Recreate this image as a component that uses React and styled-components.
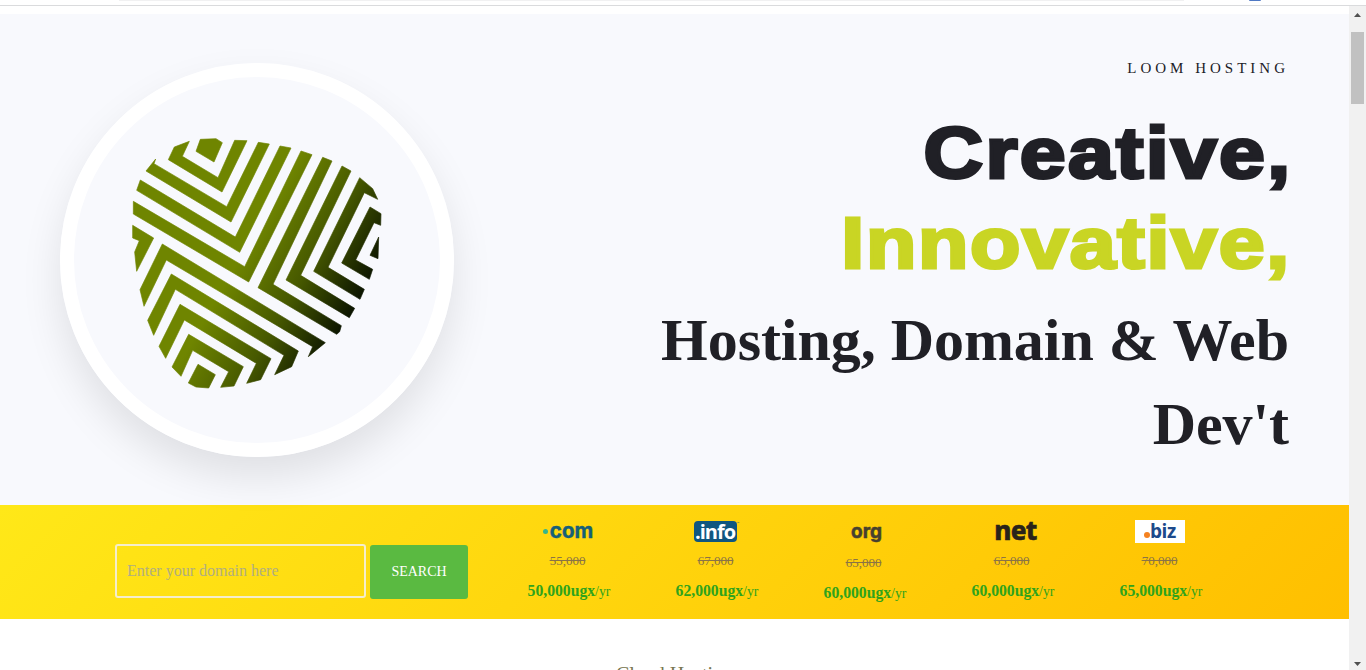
import React from "react";
import styled, { createGlobalStyle, css } from "styled-components";

const GlobalStyle = createGlobalStyle`
  * { box-sizing: border-box; }
  html, body { margin: 0; padding: 0; overflow: hidden; background: #fff; }
  body { font-family: "Liberation Serif", "Times New Roman", serif; }
`;

const Window = styled.div`
  display: flex;
  flex-direction: column;
  width: 1366px;
  height: 670px;
  overflow: hidden;
`;

const BrowserEdge = styled.div`
  display: flex;
  flex: none;
  align-items: flex-start;
  height: 6px;
  padding-left: 119px;
  border-bottom: 1px solid #dadbdd;
  background: #fff;
`;

const AddressEdge = styled.div`
  width: 1065px;
  height: 1px;
  background: #f1f1f2;
`;

const ExtensionEdge = styled.div`
  width: 12px;
  height: 1px;
  margin-left: 65px;
  border-radius: 0 0 2px 2px;
  background: #5079c4;
`;

const Viewport = styled.div`
  display: flex;
  flex: 1;
  min-height: 0;
`;

const Page = styled.main`
  width: 1349px;
  padding-top: 8px;
  overflow: hidden;
`;

const Hero = styled.section`
  display: flex;
  justify-content: space-between;
  height: 491px;
  padding: 49px 61px 0 60px;
  background: #f8f9fd;
`;

const LogoRing = styled.div`
  display: flex;
  flex: none;
  align-items: center;
  justify-content: center;
  width: 394px;
  height: 394px;
  padding: 5px 0 0 0;
  border: 14px solid #fff;
  border-radius: 50%;
  box-shadow: 0 20px 40px rgba(0, 0, 0, 0.1);
`;

const Intro = styled.div`
  display: flex;
  flex-direction: column;
  align-items: flex-end;
  width: 640px;
  text-align: right;
  color: #202026;
`;

const Eyebrow = styled.div`
  height: 48px;
  margin-top: -4px;
  font-size: 15px;
  line-height: 18px;
  letter-spacing: 4px;
  margin-right: -1px;
`;

const Display = styled.div`
  height: 90px;
  margin-right: ${(p) => p.$pull}px;
  color: ${(p) => p.$color};
  font: bold 73px/91px "Liberation Sans", Arial, sans-serif;
  letter-spacing: ${(p) => p.$spacing}px;
  -webkit-text-stroke: 3.2px ${(p) => p.$color};
  transform: scaleX(1.13);
  transform-origin: right center;
  white-space: nowrap;
`;

const Tagline = styled.h1`
  margin: 11px -1px 0 0;
  font-size: 60px;
  line-height: 84px;
  font-weight: bold;
  letter-spacing: -0.05px;
  white-space: nowrap;
`;

const DomainBar = styled.section`
  display: flex;
  height: 114px;
  padding-left: 115px;
  background: linear-gradient(135deg, #ffe818 0%, #ffbf00 100%);
`;

const SearchForm = styled.form`
  display: flex;
  gap: 4px;
  width: 379px;
  padding-top: 39px;
`;

const DomainInput = styled.input`
  width: 251px;
  height: 54px;
  padding: 0 10px;
  border: 2px solid #f5edcb;
  border-radius: 3px;
  outline: none;
  background: transparent;
  font: 16px "Liberation Serif", serif;
  &::placeholder { color: #b1ae80; opacity: 1; }
`;

const SearchButton = styled.button`
  width: 98px;
  height: 54px;
  margin-top: 1px;
  padding: 0;
  border: 0;
  border-radius: 3px;
  background: #5aba41;
  color: #fff;
  font: 14px "Liberation Serif", serif;
`;

const Offers = styled.div`
  display: grid;
  grid-template-columns: repeat(5, 148px);
`;

const Offer = styled.div`
  display: flex;
  flex-direction: column;
  align-items: center;
  padding-top: ${(p) => (p.$low ? 17 : 15)}px;
`;

const LogoSlot = styled.div`
  display: flex;
  align-items: center;
  justify-content: center;
  height: 23px;
`;

const OldPrice = styled.div`
  margin: 9px 1px 0 0;
  color: #8a7346;
  font-size: 13px;
  line-height: 18px;
  text-decoration: line-through;
`;

const Price = styled.div`
  margin: 12px 0 0 2px;
  color: #2fa31c;
  font-size: 13.8px;
  line-height: 18px;
  white-space: nowrap;
  b { font-size: 15.7px; }
`;

const wordmark = css`
  font-family: ${(p) => p.$font};
  font-weight: ${(p) => p.$weight || 700};
  font-size: ${(p) => p.$size}px;
  letter-spacing: ${(p) => p.$spacing || 0}px;
  line-height: 23px;
`;

const Wordmark = styled.span`
  ${wordmark}
  margin-top: ${(p) => p.$top || 0}px;
  margin-left: ${(p) => p.$left || 0}px;
  color: ${(p) => p.$color};
  -webkit-text-stroke: ${(p) => p.$stroke || 0}px ${(p) => p.$color};
`;

const ComDot = styled.i`
  width: 5px;
  height: 5px;
  margin-right: 2px;
  border-radius: 50%;
  background: #35b58c;
`;

const InfoBadge = styled.span`
  ${wordmark}
  width: 43px;
  height: 21px;
  border-radius: 4px;
  background: #10567f;
  color: #fff;
  line-height: 21px;
  text-align: center;
`;

const TradeMark = styled.small`
  align-self: flex-start;
  width: 3px;
  margin-right: -1px;
  color: #10567f;
  font: 3px/6px "Liberation Sans", sans-serif;
`;

const BizBadge = styled.span`
  ${wordmark}
  display: flex;
  align-items: baseline;
  justify-content: center;
  width: 50px;
  height: 23px;
  background: #fff;
  color: #1d4a8b;
`;

const BizDot = styled.i`
  width: 6px;
  height: 6px;
  border-radius: 50%;
  background: #f58220;
`;

const NextSection = styled.section`
  padding-top: 44px;
  color: #77754f;
  font-size: 20px;
  line-height: 22px;
  text-align: center;
`;

const Scrollbar = styled.aside`
  display: flex;
  flex-direction: column;
  align-items: center;
  justify-content: space-between;
  width: 17px;
  padding: 7px 0 4px;
  background: #f1f1f1;
`;

const Thumb = styled.div`
  width: 13px;
  height: 72px;
  margin: 15px 0 auto;
  background: #c1c1c1;
`;

const Arrow = styled.svg`
  display: block;
  width: 7px;
  height: 4px;
  fill: #505050;
`;

const LOGO_SHAPES = [
  "230,78 243,42 290,40 309,52 284,110",
  "210,48 165,65 147,103 308,200 383,46 346,45 296,157 189,93",
  "109,101 80,137 335,290 450,56 417,51 322,244 104,115",
  "63,164 52,195 361,381 515,68 482,62 348,335",
  "42,228 42,266 388,470 578,88 545,77 376,424",
  "610,96 638,107 461,477 666,601 661,619 652,627 416,487",
  "668,122 695,137 544,450 706,549 690,577 500,464",
  "721,157 760,190 775,222 735,202 626,426 735,492 722,522 583,438",
  "752,245 785,265 784,300 764,292 709,404 760,432 750,462 667,413",
  "778,335 776,400 752,390",
  "40,300 103,338 52,438 46,380 60,346 40,338",
  "129,356 618,652 567,694 580,664 141,404 74,543 62,493",
  "156,446 537,677 517,724 466,748 494,690 168,492 103,630 85,585",
  "182,537 455,700 424,763 382,774 411,714 195,584 139,699 119,663",
  "208,627 372,724 344,782 304,786 328,739 220,675 185,753 158,725",
  "236,717 288,748 268,788 230,785 207,773",
];

function LoomLogo() {
  return (
    <svg width="250" height="252" viewBox="38 35 750 756" aria-label="Loom">
      <defs>
        <linearGradient id="weave" gradientUnits="userSpaceOnUse" x1="440" y1="260" x2="775" y2="452">
          <stop offset="0" stopColor="#6f8500" />
          <stop offset="0.5" stopColor="#465800" />
          <stop offset="1" stopColor="#081000" />
        </linearGradient>
      </defs>
      {LOGO_SHAPES.map((points) => (
        <polygon key={points} points={points} fill="url(#weave)" stroke="url(#weave)" strokeWidth="2" />
      ))}
    </svg>
  );
}

const OFFERS = [
  {
    logo: (
      <>
        <ComDot />
        <Wordmark $font="Inter, sans-serif" $weight={700} $size={20.5} $color="#165f78" $top={-3} $stroke={0.4}>com</Wordmark>
      </>
    ),
    old: "55,000",
    price: "50,000ugx",
  },
  {
    logo: (
      <>
        <InfoBadge $font='"Open Sans", sans-serif' $size={20} $spacing={-1}>.info</InfoBadge>
        <TradeMark>™</TradeMark>
      </>
    ),
    old: "67,000",
    price: "62,000ugx",
  },
  {
    logo: <Wordmark $font="Inter, sans-serif" $weight={700} $size={19} $color="#46402f" $top={-4} $left={5} $stroke={0.5}>org</Wordmark>,
    old: "65,000",
    price: "60,000ugx",
    low: true,
  },
  {
    logo: <Wordmark $font='"Noto Sans", sans-serif' $weight={800} $size={26} $spacing={-0.6} $color="#29231a" $top={-2} $left={7} $stroke={0.5}>net</Wordmark>,
    old: "65,000",
    price: "60,000ugx",
  },
  {
    logo: <BizBadge $font='"Open Sans", sans-serif' $size={19} $spacing={-0.3}><BizDot />biz</BizBadge>,
    old: "70,000",
    price: "65,000ugx",
  },
];

export default function App() {
  return (
    <Window>
      <GlobalStyle />
      <BrowserEdge>
        <AddressEdge />
        <ExtensionEdge />
      </BrowserEdge>
      <Viewport>
        <Page>
          <Hero>
            <LogoRing><LoomLogo /></LogoRing>
            <Intro>
              <Eyebrow>LOOM HOSTING</Eyebrow>
              <Display $color="#202026" $spacing={2} $pull={-4}>Creative,</Display>
              <Display $color="#c9d524" $spacing={1.5} $pull={-3}>Innovative,</Display>
              <Tagline>Hosting, Domain &amp; Web<br />Dev't</Tagline>
            </Intro>
          </Hero>
          <DomainBar>
            <SearchForm onSubmit={(e) => e.preventDefault()}>
              <DomainInput placeholder="Enter your domain here" />
              <SearchButton>SEARCH</SearchButton>
            </SearchForm>
            <Offers>
              {OFFERS.map((o, i) => (
                <Offer key={i} $low={o.low}>
                  <LogoSlot>{o.logo}</LogoSlot>
                  <OldPrice>{o.old}</OldPrice>
                  <Price><b>{o.price}</b>/yr</Price>
                </Offer>
              ))}
            </Offers>
          </DomainBar>
          <NextSection>Cloud Hosting</NextSection>
        </Page>
        <Scrollbar>
          <Arrow viewBox="0 0 7 4"><path d="M0 4 3.5 0 7 4Z" /></Arrow>
          <Thumb />
          <Arrow viewBox="0 0 7 4"><path d="M0 0h7L3.5 4Z" /></Arrow>
        </Scrollbar>
      </Viewport>
    </Window>
  );
}
